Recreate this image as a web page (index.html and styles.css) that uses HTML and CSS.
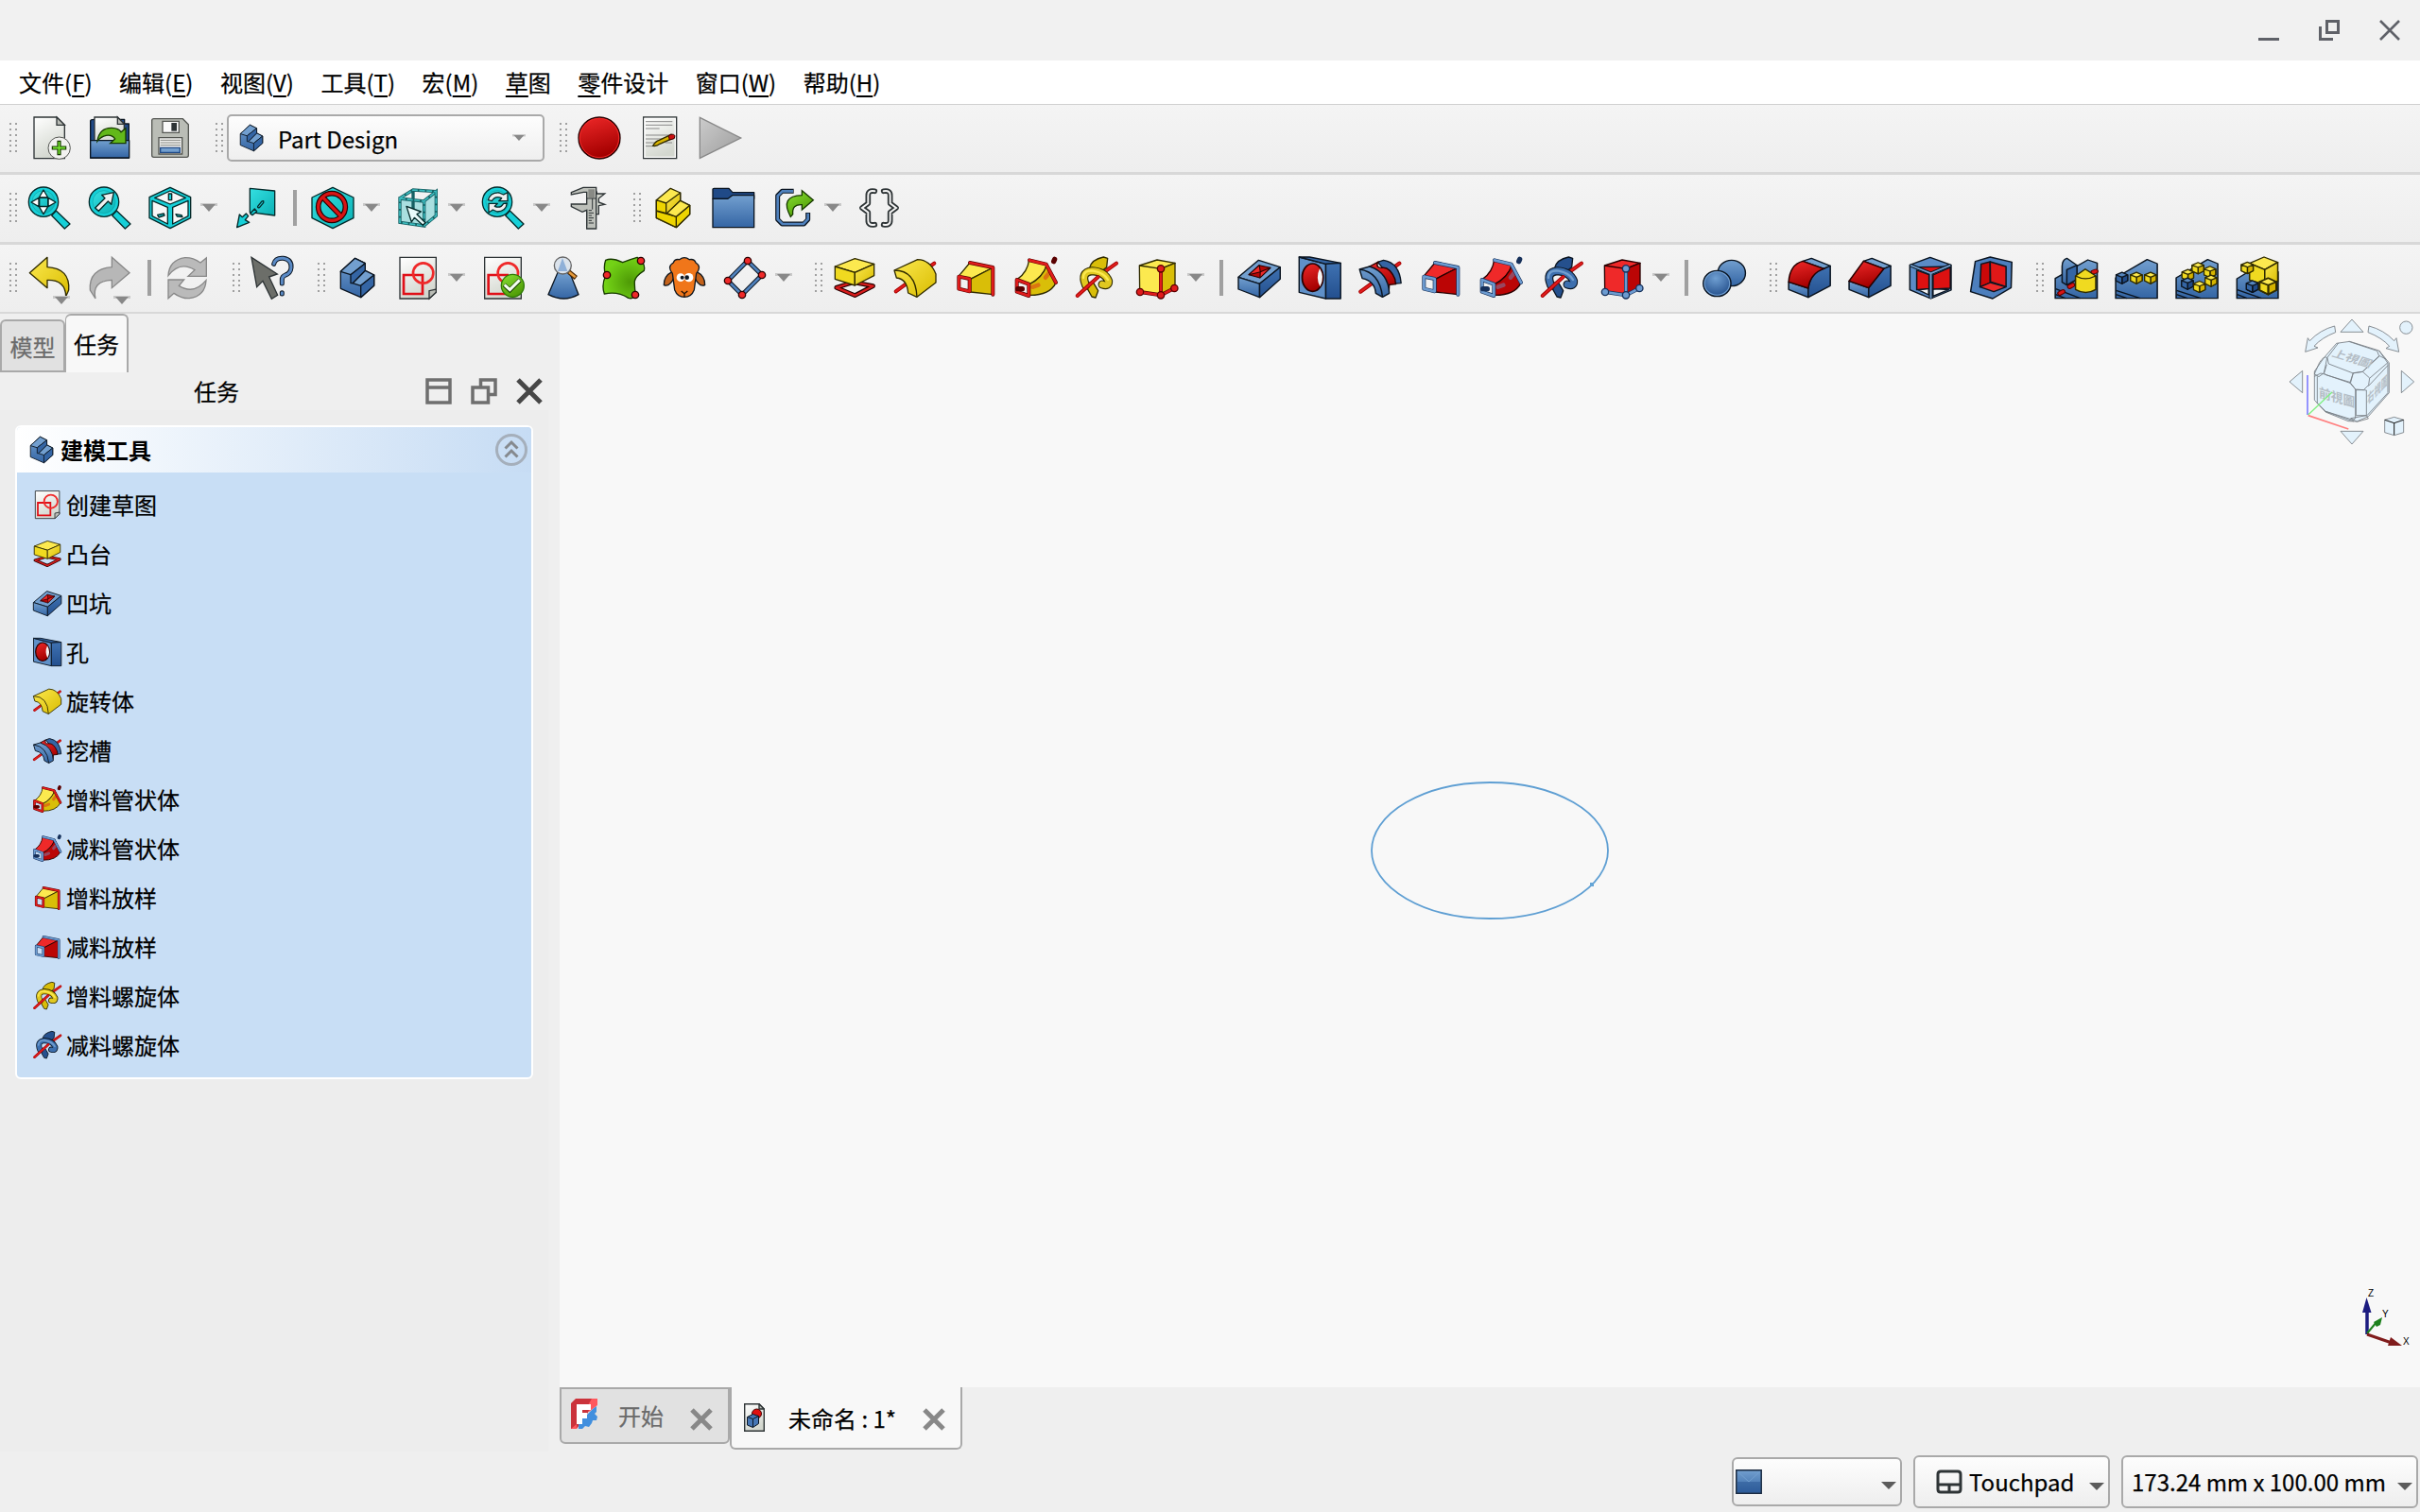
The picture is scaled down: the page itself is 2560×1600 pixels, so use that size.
FILE: index.html
```html
<!DOCTYPE html>
<html lang="zh-CN">
<head>
<meta charset="utf-8">
<title>FreeCAD</title>
<link rel="stylesheet" href="styles.css">
</head>
<body>
<svg class="defs" width="0" height="0">
<defs>
<linearGradient id="gb" x1="0" y1="0" x2="0" y2="1"><stop offset="0" stop-color="#729fcf"/><stop offset="1" stop-color="#3465a4"/></linearGradient>
<linearGradient id="gbd" x1="0" y1="0" x2="0" y2="1"><stop offset="0" stop-color="#3f72b2"/><stop offset="1" stop-color="#234f8e"/></linearGradient>
<linearGradient id="gy" x1="0" y1="0" x2="1" y2="1"><stop offset="0" stop-color="#fce94f"/><stop offset="1" stop-color="#d9bc00"/></linearGradient>
<linearGradient id="gr" x1="0" y1="0" x2="0.3" y2="1"><stop offset="0" stop-color="#ef2929"/><stop offset="1" stop-color="#a40000"/></linearGradient>
<linearGradient id="gc" x1="0" y1="0" x2="1" y2="1"><stop offset="0" stop-color="#34e0e2"/><stop offset="1" stop-color="#0bb0b4"/></linearGradient>
<linearGradient id="gp" x1="0" y1="0" x2="0.4" y2="1"><stop offset="0" stop-color="#ffffff"/><stop offset="1" stop-color="#d3d7cf"/></linearGradient>
<linearGradient id="gg" x1="0" y1="0" x2="1" y2="1"><stop offset="0" stop-color="#cccccc"/><stop offset="1" stop-color="#9c9c9c"/></linearGradient>
<linearGradient id="gn" x1="0" y1="0" x2="0.6" y2="1"><stop offset="0" stop-color="#8ae234"/><stop offset="1" stop-color="#4e9a06"/></linearGradient>
<radialGradient id="gs" cx="0.65" cy="0.6" r="0.6"><stop offset="0" stop-color="#4e9a06"/><stop offset="1" stop-color="#73d216"/></radialGradient>
<radialGradient id="gball" cx="0.45" cy="0.3" r="0.75"><stop offset="0" stop-color="#6f9fd2"/><stop offset="1" stop-color="#1f4a87"/></radialGradient>
</defs>

<symbol id="new" viewBox="84 66 144 144"><path class="ink" fill="url(#gp)" d="M108 72h72l25 25v106h-97z"/><path class="ink" fill="#babdb6" d="M180 72v25h25z"/><circle cx="188" cy="170" r="35" fill="#f2f2f0" stroke="#555753" stroke-width="3"/><path fill="#73e22e" stroke="#173a00" stroke-width="3.500" d="M183 148h9v17h17v9h-17v17h-9v-17h-17v-9h17z"/></symbol>
<symbol id="open" viewBox="276 66 144 144"><path class="b-ink" fill="#204a87" d="M287 84q0-5 14-5h94v14h14v108H287z"/><path class="ink" fill="url(#gp)" d="M300 72h73l21 23v60h-94z"/><path class="ink" fill="#babdb6" d="M373 72v22h21z"/><path class="b-ink" fill="url(#gb)" d="M287 146h123v55H287z"/><path fill="#62b81a" stroke="#173a00" stroke-width="4" d="M309 148q6-43 46-42 22 1 29 13l15-12v48h-49l15-14q-9-14-28-11-16 3-28 18z"/></symbol>
<symbol id="save" viewBox="468 66 144 144"><path fill="#babdb6" stroke="#555753" stroke-width="4" d="M488 77h92l18 18v98q0 6-6 6h-104q-6 0-6-6V83q0-6 6-6z"/><path fill="#fafafa" stroke="#555753" stroke-width="4" d="M516 85h52v36h-52z"/><path fill="#2e3436" d="M544 90h17v26h-17z"/><path fill="#eeeeec" stroke="#555753" stroke-width="4" d="M504 137h74v52h-74z"/><path stroke="#888a85" stroke-width="3" d="M509 145h64m-64 8h64m-64 8h64"/><path fill="#729fcf" stroke="#204a87" stroke-width="4" d="M509 169h62v15h-62z"/></symbol>
<symbol id="record" viewBox="390 66 144 144"><circle cx="462" cy="138" r="66" fill="url(#gr)" stroke="#280000" stroke-width="4"/><circle cx="462" cy="138" r="62" fill="none" stroke="#ef2929" stroke-width="3"/></symbol>
<symbol id="macro" viewBox="582 66 144 144"><path class="ink" fill="url(#gp)" d="M602 72h105v131H602z"/><path fill="none" stroke="#fff" stroke-width="4" d="M606 76h97v123h-97z"/><path fill="none" stroke="#888" stroke-width="3" d="M609 86h85m-85 11h85m-85 11h44m-44 21h85m-85 12h70m-70 12h40m-40 11h22m40-11h22"/><path fill="#d8b400" stroke="#302b00" stroke-width="4" d="M632 163q8-15 20-18l38-18 10 10-46 20q-10 8-22 6z"/><path fill="#cc1010" stroke="#400" stroke-width="3" d="M682 133l5-6q14-2 15 5l-3 8-14 4z"/></symbol>
<symbol id="play" viewBox="774 66 144 144"><path fill="url(#gg)" stroke="#888" stroke-width="4" d="M781 73l130 65-130 64z"/></symbol>

<symbol id="lens" viewBox="84 288 144 144"><path class="c-ink" fill="#16d0d8" d="M164 384l14-15 44 42-17 15z"/><circle class="c-ink" cx="138" cy="341" r="47" fill="#16d0d8"/><circle cx="138" cy="341" r="36" fill="url(#gc)" stroke="#0aa5a8" stroke-width="2"/></symbol>
<symbol id="fit" viewBox="84 288 144 144"><use href="#lens" x="84" y="288" width="144" height="144"/><path class="c-ink" fill="#fff" d="M138 303l14 24h-28zM138 380l14-24h-28zM99 342l24-14v28zM177 342l-24-14v28z"/><path class="c-ink" fill="none" d="M125 328h27v27h-27z"/></symbol>
<symbol id="fitsel" viewBox="84 288 144 144"><use href="#lens" x="84" y="288" width="144" height="144"/><path class="c-ink" fill="#f0f0f0" d="M110 360l31-31-10-10 38-8-8 38-10-10-30 31z"/></symbol>
<symbol id="sync" viewBox="84 288 144 144"><use href="#lens" x="84" y="288" width="144" height="144"/><path class="c-ink" fill="#f0f0f0" d="M109 335q8-25 35-23l14 6 13-7v27h-28l9-9q-20-9-31 9zM169 345q-3 26-31 27l-14-6-13 9v-29h28l-9 9q18 8 28-9z"/></symbol>
<symbol id="iso" viewBox="468 288 144 144"><path class="c-ink" fill="#16d0d8" d="M540 295l65 31v66l-65 33-66-33v-66z"/><path class="c-ink" fill="#f7f7f7" d="M540 306l49 22-49 20-49-20zM483 337l49 21v53l-49-25zM597 337l-49 21v53l49-25z"/><path class="c-ink" fill="#16d0d8" d="M535 315h10v20h-10zM500 382l20-4 2 6-18 6zM558 380l18 3 3 6-17-2z"/></symbol>
<symbol id="align" viewBox="738 288 144 144"><path class="c-ink" fill="url(#gc)" d="M793 298l79 8v78l-79-10z"/><path class="c-ink" fill="#16d0d8" d="M818 355l12-15q8-6 6 4l-12 14q-7 4-6-3zM794 378l14-15 7 8-14 12zM752 422l8-41 9 8 12-11 7 8-10 12 13 8z"/></symbol>
<symbol id="nogo" viewBox="984 288 144 144"><path class="c-ink" fill="url(#gc)" d="M1056 295l66 32v65l-66 33-66-33v-65z"/><circle cx="1053" cy="357" r="43" fill="none" stroke="#280000" stroke-width="17"/><path stroke="#280000" stroke-width="17" d="M1024 326l60 62"/><circle cx="1053" cy="357" r="43" fill="none" stroke="#d81414" stroke-width="10"/><path stroke="#d81414" stroke-width="10" d="M1022 324l64 66"/></symbol>
<symbol id="bound" viewBox="1254 288 144 144"><path fill="#a9dfe0" d="M1268 329l78 8v81l-78-12zM1346 337l38-30v77l-38 33z"/><path fill="none" stroke="#155f62" stroke-width="10" d="M1269 330l77 9v78l-77-11zM1346 338l38-30v77l-38 31M1269 329l42-26 73 5M1311 304v75"/><path fill="none" stroke="#3dbcbf" stroke-width="5" stroke-dasharray="18 5" d="M1269 330l77 9v78l-77-11zM1346 338l38-30v77l-38 31M1269 329l42-26 73 5"/><path class="c-ink" fill="#e8fafa" d="M1290 355l46 17-13 8 27 27-8 8-27-24-9 14z"/></symbol>
<symbol id="caliper" viewBox="354 288 144 144"><path class="ink" fill="#bdc0ba" d="M373 311l38-16h41v131h-30v-59l-14 6-35-17v-8h49v-38h-10l-39 8z"/><path class="ink" fill="#d3d7cf" d="M452 306l3 9h24l-19 15v12l19 7-19 4v27h-8z"/><path fill="#888a85" d="M427 301h20v27h-20z"/><path stroke="#2e3436" stroke-width="3" fill="none" d="M422 330h30M422 367v50M428 368h10m-10 8h16m-16 8h10m-10 8h16m-16 8h10m-10 8h16M440 330v35"/></symbol>
<symbol id="part" viewBox="624 288 144 144"><g class="y-ink"><path fill="#fce94f" d="M643 335l45-37 31 14v25l30 15v28l-43 42-63-30z"/><path fill="#edd400" d="M643 335l31 10v32l-31-8zM643 370l63 17v35l-63-30zM706 388l43-36v28l-43 42z"/><path fill="url(#gy)" d="M674 345l45-33v25l-41 40h-4z"/><path fill="#fce94f" d="M676 377l43-40 30 15-43 36z"/></g></symbol>
<symbol id="folder" viewBox="816 288 144 144"><path class="b-ink" fill="#204a87" d="M822 301q0-3 4-3h47l12 13h68v20H822z"/><path class="b-ink" fill="url(#gb)" d="M822 331h48l14-11h69v102H822z"/></symbol>
<symbol id="export" viewBox="1008 288 144 144"><path fill="none" stroke="#0b1521" stroke-width="15" stroke-linejoin="round" d="M1079 307h-37l-14 14v76l14 14h69l13-14v-22"/><path fill="none" stroke="#4f81bd" stroke-width="8" d="M1077 307h-34l-15 15v74l15 15h67l14-15v-19"/><path fill="url(#gn)" stroke="#173a00" stroke-width="4" d="M1069 388q-36-66 36-68v-15l36 30-36 31v-16q-32-2-29 30z"/></symbol>
<symbol id="braces" viewBox="1278 288 144 144"><path fill="none" stroke="#2e3436" stroke-width="17" stroke-linecap="round" stroke-linejoin="round" d="M1336 307q-22-4-21 14v25l-19 14 19 14v25q-1 18 21 14M1364 307q22-4 21 14v25l19 14-19 14v25q1 18-21 14"/><path fill="none" stroke="#f4f4f4" stroke-width="6" stroke-linecap="round" d="M1336 307q-22-4-21 14v25l-19 14 19 14v25q-1 18 21 14M1364 307q22-4 21 14v25l19 14-19 14v25q1 18-21 14"/></symbol>

<symbol id="undo" viewBox="84 510 144 144"><path class="y-ink" fill="url(#gy)" d="M94 566l56-49v31q73 4 68 73l-9 20q-1-53-59-52v25z"/></symbol>
<symbol id="redo" viewBox="276 510 144 144"><path fill="#b7b7b7" stroke="#888" stroke-width="4" d="M411 566l-56-49v31q-74 6-69 73l17 27q-13-56 52-59v25z"/></symbol>
<symbol id="refresh" viewBox="522 510 144 144"><path fill="#bababa" stroke="#888" stroke-width="4" d="M534 575q3-50 53-57 25-1 49 16l19-15v58h-58l21-20q-47-30-84 18zM654 590q-3 50-53 57-25 1-49-16l-18 16v-59h50l-16 19q47 30 86-17z"/></symbol>
<symbol id="whats" viewBox="792 510 144 144"><path class="ink" fill="#6c6e69" d="M798 517l82 53-26 9 27 58-19 12-28-57-19 19z"/><path fill="none" stroke="#0b1521" stroke-width="15" stroke-linecap="round" d="M869 538q5-20 30-18 27 4 25 30-2 18-18 23-11 4-11 15v12m0 29v4"/><path fill="none" stroke="#5b8bc6" stroke-width="9" stroke-linecap="round" d="M869 538q5-20 30-18 27 4 25 30-2 18-18 23-11 4-11 15v12m0 29v4"/></symbol>
<symbol id="body" viewBox="1062 510 144 144"><g class="b-ink"><path fill="url(#gb)" d="M1081 562l46-42 32 16v23l28 14v34l-42 37-64-28z"/><path fill="#729fcf" d="M1081 562l46-42 32 16-46 36zM1119 599l40-40 28 14-42 34z"/><path fill="#3465a4" d="M1113 572l46-36v23l-40 40h-6zM1145 607l42-34v34l-42 37z"/></g></symbol>
<symbol id="sketch" viewBox="1254 510 144 144"><path class="ink" fill="url(#gp)" d="M1269 517h115v110l-22 21h-93z"/><path class="ink" fill="#babdb6" d="M1384 618v10l-22 20v-25z"/><path fill="none" stroke="#e01018" stroke-width="8" d="M1281 573h60v60h-60z"/><circle cx="1343" cy="567" r="32" fill="none" stroke="#ef2929" stroke-width="8"/></symbol>
<symbol id="valid" viewBox="84 510 144 144"><path class="ink" fill="url(#gp)" d="M98 517h116v131H98z"/><path fill="none" stroke="#e01018" stroke-width="8" d="M110 573h60v60h-60z"/><circle cx="172" cy="567" r="32" fill="none" stroke="#ef2929" stroke-width="8"/><circle cx="187" cy="607" r="36" fill="url(#gn)" stroke="#2d7a05" stroke-width="4"/><path fill="none" stroke="#173a00" stroke-width="14" d="M160 604l18 17 32-32"/><path fill="none" stroke="#f4fff0" stroke-width="9" d="M161 604l17 16 31-31"/></symbol>
<symbol id="cone" viewBox="276 510 144 144"><path fill="url(#gb)" stroke="#0b1521" stroke-width="4" d="M330 565h38l28 70q-46 26-96 0z"/><path stroke="#4a2500" stroke-width="15" d="M365 563l23 19"/><path stroke="#e59a3c" stroke-width="8" d="M366 564l20 16"/><circle cx="346" cy="543" r="27" fill="#dbe3ec" stroke="#666" stroke-width="4"/><path fill="#8fb0d8" d="M345 519l16 42h-31z"/></symbol>
<symbol id="green" viewBox="468 510 144 144"><path fill="url(#gs)" stroke="#173a00" stroke-width="4" d="M482 526q20-9 54 7 22-9 46-16 28 18 22 42-28 18-30 34-1 20 4 43-8 15-24 10-34-22-76-13-10-28 4-58-8-26 0-49z"/><g fill="#ef2929" stroke="#280000" stroke-width="4"><circle cx="594" cy="528" r="11"/><circle cx="486" cy="573" r="11"/><circle cx="576" cy="636" r="11"/></g></symbol>
<symbol id="sheep" viewBox="660 510 144 144"><g stroke="#101820" stroke-width="4"><path fill="#c4621a" d="M694 562q-28 14-27 43 18 8 33-25zM770 562q28 14 27 43-18 8-33-25z"/><path fill="#f0761a" d="M694 568q-18-22 3-34 4-13 19-10 16-12 32 0 16-3 20 10 20 12 2 34l-7 52q-9 23-31 23t-31-23z"/></g><path fill="none" stroke="#1a0e05" stroke-width="4" d="M722 624l10 8 10-8m-10 8v11"/><circle cx="720" cy="581" r="13" fill="#fff"/><circle cx="746" cy="581" r="14" fill="#fff"/><circle cx="725" cy="581" r="6" fill="#101820"/><circle cx="740" cy="581" r="7" fill="#101820"/></symbol>
<symbol id="datum" viewBox="852 510 144 144"><path fill="none" stroke="#0b1521" stroke-width="14" d="M932 528l46 45-63 63-45-45z"/><path fill="none" stroke="#4f81bd" stroke-width="8" d="M932 528l46 45-63 63-45-45z"/><g fill="#ef2929" stroke="#280000" stroke-width="4"><circle cx="933" cy="528" r="11"/><circle cx="978" cy="573" r="11"/><circle cx="915" cy="636" r="11"/><circle cx="870" cy="591" r="11"/></g></symbol>

<symbol id="pad" viewBox="60 30 144 144"><path fill="none" stroke="#280000" stroke-width="14" stroke-linejoin="round" d="M74 133l54-17 63 12-58 30z"/><path fill="none" stroke="#d81c1c" stroke-width="7" stroke-linejoin="round" d="M74 133l54-17 63 12-58 30z"/><g class="y-ink"><path fill="#fce94f" d="M70 66l63-25 61 17-61 27z"/><path fill="#f0da20" d="M70 66l63 19v41l-63-20z"/><path fill="url(#gy)" d="M194 58v37l-61 31V85z"/></g></symbol>
<symbol id="rev" viewBox="252 30 144 144"><path class="axis-o" d="M263 145l122-89"/><path class="axis" d="M263 145l122-89"/><path class="y-ink" fill="url(#gy)" d="M258 78l74-34q40 1 58 46v27l-60 46-28-13q-3-44-37-48z"/><path fill="none" class="y-ink" d="M258 78q68 0 72 85"/></symbol>
<symbol id="loft" viewBox="444 30 144 144"><path class="v-ink" fill="var(--top)" d="M462 97l36-43 74 15-72 37z"/><path class="v-ink" fill="var(--side)" d="M500 106l72-37v86l-72-8z"/><path class="v-ro" d="M498 54l73 15v86"/><path class="v-r" d="M498 54l73 15v86"/><path class="v-ro" d="M463 98l34 7v40l-34-8z"/><path class="v-r" d="M463 98l34 7v40l-34-8z"/></symbol>
<symbol id="sweep" viewBox="636 30 144 144"><path class="v-ink" fill="var(--top)" d="M648 107q33-22 38-63l57 15q-11 39-57 64z"/><path class="v-ink" fill="var(--side)" d="M686 123q43-20 57-64l28 59q-20 40-85 39z"/><path class="v-dash" d="M698 131l17-6m23-24l10-13"/><path class="v-ro" d="M687 46l53 13 31 58"/><path class="v-r" d="M687 46l53 13 31 58"/><path class="v-ro" d="M647 108l38 14v37l-38-13z"/><path class="v-r" d="M647 108l38 14v37l-38-13z"/><path class="v-dot" d="M650 137h14M764 50l3-7"/></symbol>
<symbol id="helix" viewBox="828 30 144 144"><path class="axis-o" d="M915 90l48-34"/><path class="axis" d="M915 90l48-34"/><g class="v-ink"><path fill="var(--side)" d="M878 70q6-26 44-34l13 4-3 28q-10 10-22 14-12-12-32-12zM864 124l21 38 12 3 8-22-18-30z"/></g><path class="ring-o" d="M866 126q-18-42 20-46 40 2 52 32 1 18-20 11"/><path class="ring" d="M866 126q-18-42 20-46 40 2 52 32 1 18-20 11"/><path class="ring-l" d="M858 102q0-26 32-22 34 6 46 28"/><path class="axis-o" d="M839 159l66-60"/><path class="axis" d="M839 159l66-60"/></symbol>
<symbol id="prim" viewBox="1020 30 144 144"><g class="v-ink"><path fill="var(--top)" d="M1036 63l56-18 57 10-45 18v83l-67-10z"/><path fill="var(--side)" d="M1104 73l45-18v80l-45 21z"/><path fill="none" d="M1036 63l68 10"/></g><path class="v-ro" d="M1038 147l66 10V73m0 84l43-22"/><path class="v-r" d="M1038 147l66 10V73m0 84l43-22"/><g class="v-node"><circle cx="1038" cy="147" r="11"/><circle cx="1104" cy="157" r="11"/><circle cx="1104" cy="73" r="11"/><circle cx="1147" cy="135" r="11"/></g></symbol>

<symbol id="pocket" viewBox="78.400 30 134.400 144" preserveAspectRatio="none"><g class="b-ink"><path fill="#729fcf" d="M84 100l60-54 64 22-61 53z"/><path fill="url(#gb)" d="M84 100l63 21v43l-63-26z"/><path fill="url(#gbd)" d="M147 121l61-53v38l-61 58z"/></g><g class="thinred"><path fill="#b40606" d="M115 92l31-30 33 8-31 32z"/><path fill="#ef2929" d="M146 62l3 21-34 9zM149 83l30-13-31 32z"/></g></symbol>
<symbol id="hole" viewBox="257.600 30 134.400 144" preserveAspectRatio="none"><g class="b-ink"><path fill="#5f90c8" d="M264 36l79 22v110l-79-20z"/><path fill="#3465a4" d="M264 36h31l92 19-44 3z"/><path fill="url(#gbd)" d="M343 58l44-3v113h-44z"/></g><ellipse cx="304" cy="101" rx="31" ry="44" fill="url(#gr)" stroke="#280000" stroke-width="5"/><path fill="#f4f4f4" d="M325 72q16 28 1 58-14-28-1-58z"/></symbol>
<symbol id="groove" viewBox="436.800 30 134.400 144" preserveAspectRatio="none"><path class="axis-o" d="M446 146l115-90"/><path class="axis" d="M446 146l115-90"/><path class="b-ink" fill="#3465a4" d="M497 52l17-6q47 8 52 73l-16 1z"/><path fill="url(#gr)" stroke="#280000" stroke-width="4" d="M472 66l25-14q-7 20 14 18 21-3 37 36l2 16-19 2-1 20z"/><path class="b-ink" fill="url(#gb)" d="M443 75l30-9q55 19 58 85l-20 12-20-12q-3-39-40-47z"/><path fill="none" class="b-ink" d="M443 75q60 9 68 88"/></symbol>
<symbol id="bool" viewBox="1456 30 134.400 144" preserveAspectRatio="none"><circle class="b-ink" cx="1545" cy="87" r="41" fill="url(#gb)"/><circle class="b-ink" cx="1502" cy="120" r="41" fill="url(#gball)"/><circle cx="1502" cy="120" r="37" fill="none" stroke="#729fcf" stroke-width="3"/></symbol>

<symbol id="fillet" viewBox="78.400 30 125.400 144" preserveAspectRatio="none"><g class="b-ink"><path fill="#729fcf" d="M123 49l24-9 52 24-18 9z"/><path fill="url(#gb)" d="M84 115l54 20v29l-54-25z"/><path fill="url(#gbd)" d="M138 135q8-54 43-62l18-9v63l-61 37z"/></g><path fill="url(#gr)" stroke="#280000" stroke-width="4" d="M84 115q3-55 39-66l58 24q-37 15-43 62z"/></symbol>
<symbol id="chamfer" viewBox="245.600 30 125.400 144" preserveAspectRatio="none"><g class="b-ink"><path fill="#729fcf" d="M291 49l23-9 52 24-19 9z"/><path fill="url(#gb)" d="M251 112l54 22v30l-54-25z"/><path fill="url(#gbd)" d="M305 134l42-61 19-9v63l-61 37z"/></g><path fill="url(#gr)" stroke="#280000" stroke-width="4" d="M251 112l40-63 56 24-42 61z"/></symbol>
<symbol id="draft" viewBox="412.900 30 125.400 144" preserveAspectRatio="none"><g class="b-ink"><path fill="#5b8bc6" d="M419 61l56-24 58 24v80l-56 27-58-28z"/><path fill="#f5f5f5" d="M442 140l29-4v20zM483 136l43 4-43 20z"/><path fill="#dd1111" d="M438 78l34 14v44l-34 4zM483 93l48-24v66l-48 3zM441 68l90-2-54 21z"/><path fill="none" stroke="#0b1521" stroke-width="9" d="M419 61l58 26 56-26M477 87v80"/></g><path fill="none" stroke="#0b1521" stroke-width="11" d="M421 62l56 26 54-26M477 87v80"/><path fill="none" stroke="#729fcf" stroke-width="5" d="M421 62l56 26 54-26M477 87v80"/></symbol>
<symbol id="thick" viewBox="580.200 30 125.400 144" preserveAspectRatio="none"><g class="b-ink"><path fill="#4d7fbd" d="M600 50l41-14 60 16-2 81-51 35-61-22z"/><path fill="#cc0808" d="M616 58l25-7v67l-28 13z"/><path fill="#e01818" d="M641 51l44 15v64l-43-16z"/><path fill="#ef2929" d="M613 131l29-14 43 14-34 15z"/></g></symbol>
<symbol id="pbase" viewBox="982.600 30 125.400 144" preserveAspectRatio="none"><path class="b-ink" fill="url(#gb)" d="M988 102l87-58 28 13v110H988z"/><path class="b-ink" fill="none" d="M989 142l67 25M989 155l30 12"/></symbol>
<symbol id="cubey" viewBox="0 0 40 44"><path class="y-ink" fill="#fce94f" d="M2 12l18-9 17 9v20l-17 10-18-10z"/><path class="y-ink" fill="#d5b400" d="M20 20l17-8v20l-17 10z"/><path class="y-ink" fill="#f0da20" d="M2 12l18 8v22l-18-10z"/></symbol>
<symbol id="cubeb" viewBox="0 0 40 44"><path class="b-ink" fill="#5585bd" d="M2 12l18-9 17 9v20l-17 10-18-10z"/><path class="b-ink" fill="#204a87" d="M20 20l17-8v20l-17 10z"/><path class="b-ink" fill="#3465a4" d="M2 12l18 8v22l-18-10z"/></symbol>
<symbol id="mirror" viewBox="815.400 30 125.400 144" preserveAspectRatio="none"><path class="b-ink" fill="url(#gb)" d="M821 104l90-59 26 10v112H821z"/><path class="b-ink" fill="none" d="M822 137l68 30M822 155l27 12"/><path class="b-ink" fill="url(#gb)" d="M840 65q0-20 13-25l28 22v45l-28 18-13-9z"/><path class="b-ink" fill="#3465a4" d="M853 76l28-14v45l-28 18z"/><path stroke="#580000" stroke-width="15" stroke-linecap="round" d="M834 151l8-5m19-16l8-5m57-41l7-3"/><path stroke="#d81414" stroke-width="9" stroke-linecap="round" d="M834 151l8-5m19-16l8-5m57-41l7-3"/><path class="y-ink" fill="#f0da20" d="M877 96l27-22 29 22v43q-28 19-56 0z"/><path class="y-ink" fill="none" d="M877 96q27 17 56 0"/></symbol>
<symbol id="linear" viewBox="982.600 30 125.400 144" preserveAspectRatio="none"><use href="#pbase" x="982.600" y="30" width="125.400" height="144"/><use href="#cubeb" x="987" y="80" width="37" height="44"/><use href="#cubey" x="1027" y="80" width="37" height="44"/><use href="#cubey" x="1066" y="80" width="37" height="44"/></symbol>
<symbol id="polar" viewBox="982.600 30 125.400 144" preserveAspectRatio="none"><use href="#pbase" x="982.600" y="30" width="125.400" height="144"/><use href="#cubey" x="1030" y="50" width="37" height="42"/><use href="#cubey" x="1063" y="62" width="37" height="42"/><use href="#cubey" x="1002" y="72" width="37" height="42"/><use href="#cubey" x="1066" y="90" width="37" height="42"/><use href="#cubeb" x="1001" y="99" width="37" height="42"/><use href="#cubey" x="1034" y="108" width="37" height="44"/></symbol>
<symbol id="multi" viewBox="1317 30 125.400 144" preserveAspectRatio="none"><path class="b-ink" fill="url(#gb)" d="M1323 105l60-42 54 20v84H1323z"/><path class="b-ink" fill="none" d="M1324 140l67 27M1324 155l27 12"/><g class="y-ink"><path fill="#fce94f" d="M1358 56l40-20 38 17-36 23z"/><path fill="#f0da20" d="M1358 56l42 20v47l-42-14z"/><path fill="url(#gy)" d="M1400 76l36-23v60l-36 10z"/></g><use href="#cubey" x="1333" y="49" width="38" height="42"/><use href="#cubeb" x="1347" y="108" width="38" height="42"/><use href="#cubey" x="1383" y="97" width="53" height="62"/></symbol>

<symbol id="drop" viewBox="0 0 18 10"><path fill="#c9c9c9" d="M0 0h18v3H0z"/><path fill="#888" d="M2 1h14L9 9z"/></symbol>
<symbol id="grip" viewBox="0 0 9 32"><g fill="#a0a0a0"><path d="M0 0h2v2H0zM0 6h2v2H0zM0 12h2v2H0zM0 18h2v2H0zM0 23h2v2H0zM0 29h2v2H0zM6 0h2v2H6zM6 6h2v2H6zM6 12h2v2H6zM6 18h2v2H6zM6 23h2v2H6zM6 29h2v2H6z"/></g></symbol>
</svg>

<div class="titlebar">
  <svg class="winbtn" viewBox="0 0 22 24"><path fill="#5f6168" d="M0 20h22v3H0z"/></svg>
  <svg class="winbtn" viewBox="0 0 22 24"><path fill="none" stroke="#5f6168" stroke-width="3" d="M8.500 2.500h12v12h-12zM1.500 8v13.500H15"/></svg>
  <svg class="winbtn" viewBox="0 0 22 24"><path fill="none" stroke="#5f6168" stroke-width="2.600" d="M1 2l20 20M21 2L1 22"/></svg>
</div>

<nav class="menubar">
  <span>文件(<u>F</u>)</span><span>编辑(<u>E</u>)</span><span>视图(<u>V</u>)</span><span>工具(<u>T</u>)</span><span>宏(<u>M</u>)</span><span><u>草</u>图</span><span><u>零</u>件设计</span><span>窗口(<u>W</u>)</span><span>帮助(<u>H</u>)</span>
</nav>

<div class="toolbar">
  <svg class="grip"><use href="#grip"/></svg>
  <svg class="icon"><use href="#new"/></svg>
  <svg class="icon"><use href="#open"/></svg>
  <svg class="icon"><use href="#save"/></svg>
  <svg class="grip gap"><use href="#grip"/></svg>
  <div class="workbench"><svg class="mini"><use href="#body"/></svg><span>Part Design</span><svg class="arrow" viewBox="0 0 18 10"><use href="#drop"/></svg></div>
  <svg class="grip"><use href="#grip"/></svg>
  <svg class="icon"><use href="#record"/></svg>
  <svg class="icon"><use href="#macro"/></svg>
  <svg class="icon"><use href="#play"/></svg>
</div>

<div class="toolbar">
  <svg class="grip"><use href="#grip"/></svg>
  <svg class="icon"><use href="#fit"/></svg>
  <svg class="icon"><use href="#fitsel"/></svg>
  <div class="split"><svg class="icon"><use href="#iso"/></svg><svg class="drop"><use href="#drop"/></svg></div>
  <svg class="icon"><use href="#align"/></svg>
  <i class="sep"></i>
  <div class="split"><svg class="icon"><use href="#nogo"/></svg><svg class="drop"><use href="#drop"/></svg></div>
  <div class="split"><svg class="icon"><use href="#bound"/></svg><svg class="drop"><use href="#drop"/></svg></div>
  <div class="split"><svg class="icon"><use href="#sync"/></svg><svg class="drop"><use href="#drop"/></svg></div>
  <svg class="icon"><use href="#caliper"/></svg>
  <svg class="grip gap"><use href="#grip"/></svg>
  <svg class="icon"><use href="#part"/></svg>
  <svg class="icon"><use href="#folder"/></svg>
  <div class="split"><svg class="icon"><use href="#export"/></svg><svg class="drop"><use href="#drop"/></svg></div>
  <svg class="icon"><use href="#braces"/></svg>
</div>

<div class="toolbar last">
  <svg class="grip"><use href="#grip"/></svg>
  <div class="history"><svg class="icon"><use href="#undo"/></svg><svg class="drop"><use href="#drop"/></svg></div>
  <div class="history"><svg class="icon"><use href="#redo"/></svg><svg class="drop"><use href="#drop"/></svg></div>
  <i class="sep"></i>
  <svg class="icon"><use href="#refresh"/></svg>
  <svg class="grip gap"><use href="#grip"/></svg>
  <svg class="icon"><use href="#whats"/></svg>
  <svg class="grip gap"><use href="#grip"/></svg>
  <svg class="icon"><use href="#body"/></svg>
  <div class="split"><svg class="icon"><use href="#sketch"/></svg><svg class="drop"><use href="#drop"/></svg></div>
  <svg class="icon"><use href="#valid"/></svg>
  <svg class="icon"><use href="#cone"/></svg>
  <svg class="icon"><use href="#green"/></svg>
  <svg class="icon"><use href="#sheep"/></svg>
  <div class="split"><svg class="icon"><use href="#datum"/></svg><svg class="drop"><use href="#drop"/></svg></div>
  <svg class="grip gap"><use href="#grip"/></svg>
  <svg class="icon"><use href="#pad"/></svg>
  <svg class="icon"><use href="#rev"/></svg>
  <svg class="icon"><use href="#loft"/></svg>
  <svg class="icon"><use href="#sweep"/></svg>
  <svg class="icon"><use href="#helix"/></svg>
  <div class="split"><svg class="icon"><use href="#prim"/></svg><svg class="drop"><use href="#drop"/></svg></div>
  <i class="sep"></i>
  <svg class="icon"><use href="#pocket"/></svg>
  <svg class="icon"><use href="#hole"/></svg>
  <svg class="icon"><use href="#groove"/></svg>
  <svg class="icon cut"><use href="#loft"/></svg>
  <svg class="icon cut"><use href="#sweep"/></svg>
  <svg class="icon cutblue"><use href="#helix"/></svg>
  <div class="split"><svg class="icon cut"><use href="#prim"/></svg><svg class="drop"><use href="#drop"/></svg></div>
  <i class="sep"></i>
  <svg class="icon"><use href="#bool"/></svg>
  <svg class="grip gap"><use href="#grip"/></svg>
  <svg class="icon"><use href="#fillet"/></svg>
  <svg class="icon"><use href="#chamfer"/></svg>
  <svg class="icon"><use href="#draft"/></svg>
  <svg class="icon"><use href="#thick"/></svg>
  <svg class="grip gap"><use href="#grip"/></svg>
  <svg class="icon"><use href="#mirror"/></svg>
  <svg class="icon"><use href="#linear"/></svg>
  <svg class="icon"><use href="#polar"/></svg>
  <svg class="icon"><use href="#multi"/></svg>
</div>

<div class="main">
  <aside class="dock">
    <div class="docktabs"><div class="docktab">模型</div><div class="docktab active">任务</div></div>
    <div class="docktitle">
      <span>任务</span>
      <svg viewBox="0 0 28 28"><path fill="none" stroke="#6f6f6f" stroke-width="3.500" d="M2 2h24v24H2zM2 10h24"/></svg>
      <svg viewBox="0 0 28 28"><path fill="none" stroke="#6f6f6f" stroke-width="3.500" d="M10.500 9V2H26v15.500h-7M2 10h16.500v16H2z"/></svg>
      <svg viewBox="0 0 28 28"><path fill="none" stroke="#474747" stroke-width="5" d="M2 2l24 24M26 2L2 26"/></svg>
    </div>
    <div class="dockbody">
      <section class="group">
        <header><svg class="mini"><use href="#body"/></svg><b>建模工具</b><svg class="fold" viewBox="0 0 36 36"><circle cx="18" cy="18" r="15.500" fill="none" stroke="#a5afbb" stroke-width="3"/><path fill="none" stroke="#85898e" stroke-width="3" d="M11.500 16.500l6.500-6.500 6.500 6.500M11.500 25.500l6.500-6.500 6.500 6.500"/></svg></header>
        <ul>
          <li><svg class="mini"><use href="#sketch"/></svg>创建草图</li>
          <li><svg class="mini"><use href="#pad"/></svg>凸台</li>
          <li><svg class="mini"><use href="#pocket"/></svg>凹坑</li>
          <li><svg class="mini"><use href="#hole"/></svg>孔</li>
          <li><svg class="mini"><use href="#rev"/></svg>旋转体</li>
          <li><svg class="mini"><use href="#groove"/></svg>挖槽</li>
          <li><svg class="mini"><use href="#sweep"/></svg>增料管状体</li>
          <li><svg class="mini cut"><use href="#sweep"/></svg>减料管状体</li>
          <li><svg class="mini"><use href="#loft"/></svg>增料放样</li>
          <li><svg class="mini cut"><use href="#loft"/></svg>减料放样</li>
          <li><svg class="mini"><use href="#helix"/></svg>增料螺旋体</li>
          <li><svg class="mini cutblue"><use href="#helix"/></svg>减料螺旋体</li>
        </ul>
      </section>
    </div>
  </aside>

  <div class="work">
    <div class="viewport">
      <svg class="scene" viewBox="592 332 1968 1136">
        <ellipse cx="1576" cy="900" rx="125" ry="72" fill="none" stroke="#5f9fd3" stroke-width="1.800"/>
        <path fill="#65a5d6" d="M1682 934h4v4h-4z"/>
        <g class="cube" transform="translate(2380 0) scale(.33333)">
          <path d="M324 1014l36 40h-72zM324 1410l36-41h-72zM126 1212l41-35v70zM521 1212l-40-35v70z"/>
          <circle cx="496" cy="1040" r="20"/>
          <path d="M269 1035l3 20q-44 17-68 44l12 5-40 13 8-44 6 9q33-35 79-47zM378 1035l-3 20q44 17 68 44l-11 7 41 11-8-44-7 9q-33-35-80-47z"/>
          <path d="M275 1090l42-6 93 29 32 39v95l-66 75-36 16-28-1-72-29-35-38V1179l30-43z"/>
          <path d="M281 1089l-35 46 4 20 78 30 30-5 52-50-6-16-90-30M244 1157l-8 27 5 6 79 24 8-30M214 1195v85l27 26 86 27 8-5V1236l-17-20-81-28-12-3-20 10M205 1187l16-36q14-22 24-16l-4 22-6 27-16 12zM337 1236l33 3v80h-33zM318 1214l10-30 30-4 22 20-3 22-16 16h-24zM381 1200l56-48M410 1113l28 40v94l-66 72M358 1180l54-50 20 10M376 1226l62-66M240 1306l90 32M320 1328l50-9 6 10-36 10z" fill="none"/>
          <path d="M428 1333l30-9 30 9v40l-30 9-30-9z"/>
          <path class="edge" fill="none" d="M428 1333l30 10 30-10M458 1343v38"/>
          <text transform="matrix(1.050 .32 -.45 .75 258 1130)">上視圖</text>
          <text transform="matrix(.98 .28 0 1.050 219 1260)">前視圖</text>
          <text transform="matrix(.56 -.57 0 1.050 373 1285)">右視圖</text>
          <path fill="none" style="stroke:#8080ff;stroke-width:5" d="M183 1191v126"/>
          <path fill="none" style="stroke:#80f080;stroke-width:4" d="M185 1317l76-72"/>
          <path fill="none" style="stroke:#ff8080;stroke-width:5" d="M185 1319l128 43"/>
        </g>
        <g class="axes">
          <path stroke="#1c1c80" stroke-width="3.500" d="M2504 1412v-30"/><path fill="#1c1c80" d="M2499 1389l4.500-16 5 16z"/>
          <path stroke="#1c801c" stroke-width="2" d="M2504 1411l10-12"/><path fill="#1c801c" d="M2511 1399l9-5-2 8-4 2z"/>
          <path stroke="#801c1c" stroke-width="3" d="M2504 1412l26 9"/><path fill="#801c1c" d="M2529 1415l12 9h-15z"/>
          <text x="2505" y="1372">Z</text><text x="2520" y="1394">Y</text><text x="2542" y="1423">X</text>
        </g>
      </svg>
    </div>
    <div class="doctabs">
      <div class="doctab"><svg class="logo" viewBox="0 0 28 32"><path fill="#cb333b" d="M5 0h23L6 32H0V5z"/><path fill="#ff585d" d="M22 0h6v7l-9 7-1-7zM0 32l6-5v5z"/><path fill="#418fde" d="M23 11l4-3v6l-2 2 3 3-1 4h-4l-1 3-3 4-4-1-3 3H8V18h8z"/><path fill="#fff" d="M6 6h15v6h-9v3h5v6h-5v6H6z"/></svg><span>开始</span><svg class="close" viewBox="0 0 24 24"><path stroke="#888" stroke-width="5" d="M2 2l20 20M22 2L2 22"/></svg></div>
      <div class="doctab active"><svg class="page" viewBox="0 0 22 30"><path class="thin" fill="url(#gp)" d="M.700.700h15.300l5.300 5.300v23.300H.700z"/><path class="thin" fill="#babdb6" d="M16 .700v5.300h5.300z"/><circle cx="13.500" cy="11" r="5" fill="#e01010" stroke="#400"/><path fill="#4576b5" stroke="#0b1521" d="M3.500 14.500l6-3 6 2v8l-6 4-6-2.500z"/><path fill="none" stroke="#0b1521" d="M3.500 14.500l6 2 6-3m-6 3v9"/></svg><span>未命名 : 1*</span><svg class="close" viewBox="0 0 24 24"><path stroke="#888" stroke-width="5" d="M2 2l20 20M22 2L2 22"/></svg></div>
    </div>
  </div>
</div>

<footer class="status">
  <div class="box notify"><svg viewBox="0 0 28 26"><path fill="url(#gb)" stroke="#1a2a40" stroke-width="1.500" d="M.800.800h26.400v24.400H.800z"/><path fill="#234f8e" fill-opacity=".45" d="M2 13h24v11H2z"/><path fill="none" stroke="#729fcf" stroke-width="1" d="M2 2l12 11L26 2"/></svg><svg class="tri" viewBox="0 0 16 8"><path d="M0 0h16L8 8z"/></svg></div>
  <div class="box touch"><svg viewBox="0 0 28 26"><path fill="none" stroke="#2e3436" stroke-width="3" d="M5 2h18q3 0 3 3v16q0 3-3 3H5q-3 0-3-3V5q0-3 3-3zM2 16h24M14 16v8"/></svg><span>Touchpad</span><svg class="tri" viewBox="0 0 16 8"><path d="M0 0h16L8 8z"/></svg></div>
  <div class="box size"><span>173.24 mm x 100.00 mm</span><svg class="tri" viewBox="0 0 16 8"><path d="M0 0h16L8 8z"/></svg></div>
</footer>
</body>
</html>
```

FILE: styles.css
```css
* { box-sizing: border-box; }
html, body { margin: 0; width: 2560px; height: 1600px; overflow: hidden; }
body {
  display: flex;
  flex-direction: column;
  background: #efefef;
  color: #000;
  font: 24px/36px "Noto Sans CJK SC", sans-serif;
  -webkit-text-stroke: 0.25px currentColor;
  white-space: nowrap;
  --top: #fce94f;
  --side: #d9be08;
  --mid: #e0c820;
  --line: #302b00;
  --rim: #e01c1c;
  --rimline: #5a0000;
}
svg { display: block; flex: none; }
.defs { position: absolute; }

/* icon palettes */
.cut { --top: #ef2929; --side: #bb0505; --line: #280000; --rim: #6c9bd0; --rimline: #16305a; }
.cutblue { --top: #729fcf; --side: #25508d; --mid: #3d6fae; --line: #0b1521; }
.ink { stroke: #2e3436; stroke-width: 4; }
.b-ink, .b-ink path { stroke: #0b1521; stroke-width: 4; stroke-linejoin: round; }
.y-ink, .y-ink path { stroke: #302b00; stroke-width: 4; stroke-linejoin: round; }
.c-ink { stroke: #042a2a; stroke-width: 4; stroke-linejoin: round; }
.thinred path { stroke: #280000; stroke-width: 3; stroke-linejoin: round; }
.v-ink, .v-ink path { stroke: var(--line); stroke-width: 4; stroke-linejoin: round; }
.v-ro, .v-r { fill: none; stroke-linejoin: round; stroke-linecap: round; }
.v-ro { stroke: var(--rimline); stroke-width: 12; }
.v-r { stroke: var(--rim); stroke-width: 8; }
.v-node circle { fill: var(--rim); stroke: var(--rimline); stroke-width: 4; }
.v-dash { fill: none; stroke: var(--rim); stroke-width: 14; stroke-linecap: round; opacity: .45; }
.v-dot { fill: none; stroke: var(--rimline); stroke-width: 16; stroke-linecap: round; }
.ring-o, .ring, .ring-l { fill: none; stroke-linecap: round; stroke-linejoin: round; }
.ring-o { stroke: var(--line); stroke-width: 27; }
.ring { stroke: var(--mid); stroke-width: 20; }
.ring-l { stroke: var(--top); stroke-width: 7; }
.axis, .axis-o { fill: none; stroke-linecap: round; }
.axis-o { stroke: #a40000; stroke-width: 12; }
.axis { stroke: #e01c1c; stroke-width: 7; }
.thin { stroke: #2e3436; stroke-width: 1.4; }

.titlebar {
  height: 64px;
  flex: none;
  display: flex;
  justify-content: flex-end;
  align-items: center;
  gap: 42px;
  padding-right: 21px;
  background: #f1f1f1;
}
.winbtn { width: 22px; height: 24px; }

.menubar {
  height: 47px;
  flex: none;
  display: flex;
  align-items: center;
  padding: 0 0 0 20px;
  gap: 28.5px;
  background: #fff;
  border-bottom: 1px solid #d0d0d0;
}
.menubar u { text-decoration-thickness: 2px; text-underline-offset: 4px; text-decoration-skip-ink: none; }

.toolbar {
  height: 74px;
  flex: none;
  display: flex;
  align-items: center;
  gap: 16px;
  padding: 0 0 1px 10px;
  background: linear-gradient(#f4f4f4, #eeeeee);
  border-bottom: 3px solid #d8d8d8;
}
.toolbar.last { height: 73px; border-bottom-width: 2px; }
.icon { width: 48px; height: 48px; }
.mini { width: 32px; height: 32px; }
.grip { width: 9px; height: 32px; margin: 0 -7px 0 0; }
.grip.gap { margin-left: 8px; }
.sep { width: 4px; height: 38px; margin-right: -2px; background: #a0a0a0; }
.split { width: 74px; display: flex; align-items: center; }
.drop { width: 18px; height: 10px; }
.split .drop { margin-left: 8px; }
.history { position: relative; }
.history .drop { position: absolute; left: 28px; bottom: -5px; }
.workbench {
  width: 336px;
  height: 50px;
  margin-left: -6px;
  display: flex;
  align-items: center;
  padding: 0 18px 0 8px;
  border: 2px solid #a9a9a9;
  border-radius: 5px;
  background: linear-gradient(#fdfdfd, #efefef);
}
.workbench span { flex: 1; padding: 2px 0 0 12px; }
.workbench .arrow { width: 14px; height: 8px; }

.main { height: 1204px; flex: none; display: flex; }
.dock { width: 592px; height: 1204px; display: flex; flex-direction: column; }
.docktabs { height: 62px; display: flex; align-items: flex-end; }
.docktab {
  width: 69px;
  height: 56px;
  line-height: 54px;
  text-align: center;
  border: 2px solid #a9a9a9;
  border-radius: 6px 6px 0 0;
  background: #e1e1e1;
  color: #6b6b6b;
}
.docktab.active { width: 67px; height: 62px; border-bottom: 0; border-left-width: 1px; background: #f8f8f8; color: #000; line-height: 60px; }
.docktitle { height: 40px; display: flex; align-items: center; gap: 20px; padding-right: 18px; }
.docktitle span { width: 458px; margin-right: -28px; text-align: center; }
.docktitle svg { width: 28px; height: 28px; }
.dockbody { width: 580px; flex: 1; padding: 16px; background: #ededed; }
.group { width: 548px; height: 692px; border: 2px solid #fff; border-radius: 6px; background: #c8def5; }
.group header {
  height: 48px;
  display: flex;
  align-items: center;
  padding: 0 3px 0 10px;
  background: linear-gradient(90deg, #fff, #c6dcf4);
  border-radius: 4px 4px 0 0;
}
.group b { flex: 1; padding-left: 4px; font-weight: 700; -webkit-text-stroke: 0; }
.fold { width: 36px; height: 36px; }
.group ul { list-style: none; margin: 0; padding: 8px 0 0 16px; }
.group li { height: 52px; display: flex; align-items: center; gap: 4px; }

.work { width: 1968px; display: flex; flex-direction: column; }
.viewport { height: 1136px; background: #f8f8f8; }
.scene { width: 1968px; height: 1136px; }
.cube path, .cube circle { stroke: #737a80; stroke-width: 2.5; }
.cube path:not([fill]), .cube circle { fill: #e3f2fc; }
.cube .edge { stroke: #111; stroke-width: 3; }
.cube text { font-size: 39px; font-weight: 700; fill: #b4bdc5; stroke: none; font-family: "Noto Sans CJK TC", sans-serif; }
.axes text { font: 10px "Liberation Sans", sans-serif; fill: #000; }

.doctabs { display: flex; align-items: flex-start; }
.doctab {
  width: 180px;
  height: 60px;
  display: flex;
  align-items: center;
  padding-left: 10px;
  border: 2px solid #a9a9a9;
  border-radius: 0 0 6px 6px;
  background: #e1e1e1;
  color: #6b6b6b;
}
.doctab .logo { width: 28px; height: 32px; margin-bottom: 4px; }
.doctab span { width: 90px; padding-left: 22px; }
.doctab .close { width: 24px; height: 24px; margin: 7px 0 0 8px; }
.doctab.active { width: 246px; height: 66px; border-top: 0; background: #f8f8f8; color: #000; padding-left: 13px; }
.doctab .page { width: 22px; height: 30px; }
.doctab.active span { width: 159px; padding: 2px 0 0 25px; }
.doctab.active .close { margin: 4px 0 0 8px; }

.status { height: 64px; flex: none; display: flex; justify-content: flex-end; gap: 12px; padding: 4px 2px 0 0; }
.box {
  height: 56px;
  display: flex;
  align-items: center;
  border: 2px solid #a9a9a9;
  border-radius: 6px;
  background: linear-gradient(#fdfdfd, #eeeeee);
}
.box svg { width: 28px; height: 26px; }
.box .tri { width: 16px; height: 8px; margin: 10px 4px 0 auto; fill: #5c5c5c; }
.notify { width: 180px; height: 52px; margin-top: 2px; padding-left: 2px; }
.notify .tri { margin-top: 8px; }
.touch { width: 208px; padding-left: 22px; }
.touch span { padding-left: 7px; }
.size { width: 314px; padding-left: 9px; }
```
